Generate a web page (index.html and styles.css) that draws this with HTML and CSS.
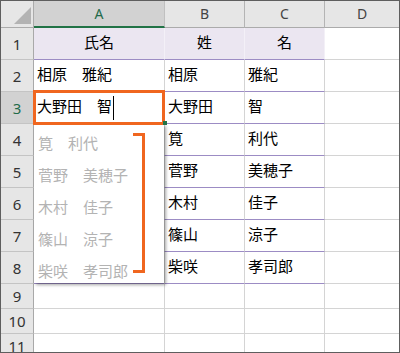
FILE: index.html
```html
<!DOCTYPE html>
<html lang="ja">
<head>
<meta charset="utf-8">
<link rel="stylesheet" href="styles.css">
</head>
<body>
<div class="sheet">
  <div class="grid">
    <div class="corner"><svg width="17" height="17" viewBox="0 0 17 17"><polygon points="17,0 17,17 0,17" fill="#b3b3b3"/></svg></div>
    <div class="ch sel">A</div><div class="ch">B</div><div class="ch">C</div><div class="ch last">D</div>

    <div class="rh">1</div><div class="c t hd ca">氏名</div><div class="c t hd">姓</div><div class="c t hd">名</div><div class="c d"></div>
    <div class="rh">2</div><div class="c t ca">相原　雅紀</div><div class="c t">相原</div><div class="c t">雅紀</div><div class="c d"></div>
    <div class="rh sel">3</div><div class="c t ca">大野田　智</div><div class="c t">大野田</div><div class="c t">智</div><div class="c d"></div>
    <div class="rh">4</div><div class="c t ca"></div><div class="c t">筧</div><div class="c t">利代</div><div class="c d"></div>
    <div class="rh">5</div><div class="c t ca"></div><div class="c t">菅野</div><div class="c t">美穂子</div><div class="c d"></div>
    <div class="rh">6</div><div class="c t ca"></div><div class="c t">木村</div><div class="c t">佳子</div><div class="c d"></div>
    <div class="rh">7</div><div class="c t ca"></div><div class="c t">篠山</div><div class="c t">涼子</div><div class="c d"></div>
    <div class="rh">8</div><div class="c t ca"></div><div class="c t">柴咲</div><div class="c t">孝司郎</div><div class="c d"></div>
    <div class="rh">9</div><div class="c"></div><div class="c"></div><div class="c"></div><div class="c d"></div>
    <div class="rh">10</div><div class="c"></div><div class="c"></div><div class="c"></div><div class="c d"></div>
    <div class="rh">11</div><div class="c"></div><div class="c"></div><div class="c"></div><div class="c d"></div>
  </div>

  <div class="dropdown">
    <div class="item">筧　利代</div>
    <div class="item">菅野　美穂子</div>
    <div class="item">木村　佳子</div>
    <div class="item">篠山　涼子</div>
    <div class="item">柴咲　孝司郎</div>
  </div>
  <div class="bracket"></div>
  <div class="active"></div>
  <div class="handle"></div>
  <div class="caret"></div>
</div>
</body>
</html>
```
FILE: styles.css
```css
html, body {
  margin: 0;
  padding: 0;
  background: #ffffff;
}

.sheet {
  position: relative;
  width: 400px;
  height: 353px;
  box-sizing: border-box;
  border: 1px solid #5e5e5e;
  overflow: hidden;
  font-family: "Noto Sans CJK JP", "Noto Sans", sans-serif;
  font-size: 15px;
  color: #000;
}

.grid {
  display: grid;
  grid-template-columns: 33px 131px 80px 80px 74px;
  grid-template-rows: 27px repeat(8, 32px) 25px 25px 25px;
}

.grid > div {
  box-sizing: border-box;
  border-right: 1px solid #d4d4d4;
  border-bottom: 1px solid #d4d4d4;
}

.corner {
  background: #e6e6e6;
  display: flex;
  justify-content: flex-end;
  align-items: flex-end;
  padding: 0 2px 3px 0;
  border-right-color: #ababab !important;
  border-bottom-color: #ababab !important;
}

.corner svg { display: block; }

.ch {
  background: #e6e6e6;
  display: flex;
  align-items: center;
  justify-content: center;
  font-family: "Noto Sans", sans-serif;
  font-size: 14px;
  color: #444;
  border-right-color: #b4b4b4 !important;
  border-bottom-color: #ababab !important;
  padding-bottom: 1px;
}

.ch.sel {
  background: #d2d2d2;
  color: #1f6b4a;
  border-bottom: 2px solid #217346 !important;
  border-right-color: #c0c0c0 !important;
  padding-bottom: 0;
}

.ch.last { border-right: none !important; }

.rh {
  background: #e6e6e6;
  display: flex;
  align-items: center;
  justify-content: center;
  font-family: "Noto Sans", sans-serif;
  font-size: 15px;
  color: #333;
  border-right-color: #a9a9a9 !important;
  border-bottom-color: #c4c4c4 !important;
}

.rh.sel {
  background: #d2d2d2;
  color: #1f6b4a;
}

.c {
  display: flex;
  align-items: center;
  padding: 0 0 5px 3px;
  white-space: nowrap;
  overflow: hidden;
}

.c.ca { padding-left: 3px; }

.c.t { border-bottom-color: #9c8cc4 !important; }

.c.hd {
  background: #ebe6f1;
  justify-content: center;
  padding-left: 0;
  border-right-color: #f3f0f7 !important;
}

.c.d { border-right: none !important; }

.dropdown {
  position: absolute;
  left: 33px;
  top: 123px;
  width: 130px;
  height: 159px;
  background: #ffffff;
  box-shadow: 2px 2px 3px rgba(0, 0, 0, 0.35);
  padding-top: 3px;
  box-sizing: border-box;
}

.item {
  height: 32px;
  line-height: 32px;
  padding-left: 4px;
  color: #b3b3b3;
  white-space: nowrap;
}

.bracket {
  position: absolute;
  left: 132px;
  top: 132px;
  width: 12px;
  height: 140px;
  box-sizing: border-box;
  border: 3px solid #f0661f;
  border-left: none;
}

.active {
  position: absolute;
  left: 32px;
  top: 89px;
  width: 132px;
  height: 35px;
  box-sizing: border-box;
  border: 3px solid #f0661f;
}

.handle {
  position: absolute;
  left: 162px;
  top: 120px;
  width: 4px;
  height: 4px;
  background: #217346;
}

.caret {
  position: absolute;
  left: 112px;
  top: 95px;
  width: 1px;
  height: 24px;
  background: #000;
}
```
